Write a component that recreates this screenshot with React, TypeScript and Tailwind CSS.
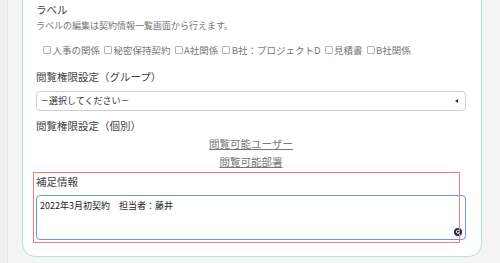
import React from "react";

const labels = ["人事の関係", "秘密保持契約", "A社関係", "B社：プロジェクトD", "見積書", "B社関係"];

export default function App() {
  return (
    <div
      className="w-[500px] h-[263px] overflow-hidden flex bg-[#f4f4f4]"
      style={{ fontFamily: '"Noto Sans CJK JP", "Noto Sans", sans-serif' }}
    >
      <div className="w-[8px] h-full bg-[#efefef] border-r border-[#e4e4e4]" />
      <div className="w-[14px] h-full" />
      <div className="w-[460px] h-[257px] bg-white border-x-[1.5px] border-b-[1.5px] border-[#b9dfdf] rounded-b-[14px] relative pl-[13px] pr-[12px]">
        <div className="pt-[2px] text-[10.5px] leading-[16px] text-[#444]">ラベル</div>
        <div className="mt-[1px] text-[9px] leading-[14px] text-[#777]">ラベルの編集は契約情報一覧画面から行えます。</div>
        <div className="mt-[10px] flex items-center gap-[4px] pl-[7px] text-[9.5px] leading-[14px] text-[#777]">
          {labels.map((l) => (
            <div key={l} className="flex items-center">
              <span className="w-[8px] h-[8px] border border-[#b5b5b5] rounded-[1px] mr-[1.5px] bg-white" />
              <span>{l}</span>
            </div>
          ))}
        </div>
        <div className="mt-[12px] text-[10.5px] leading-[16px] text-[#444]">閲覧権限設定（グループ）</div>
        <div className="mt-[6px] h-[20px] border border-[#d0d0d0] rounded-[4px] flex items-center justify-between pl-[3px] pr-[7px] w-[430px]">
          <span className="text-[9px] text-[#333]">－選択してください－</span>
          <span className="w-0 h-0 border-y-[2px] border-y-transparent border-r-[3px] border-r-[#333]" />
        </div>
        <div className="mt-[7px] text-[10.5px] leading-[16px] text-[#444]">閲覧権限設定（個別）</div>
        <div className="mt-[3px] flex flex-col items-center w-[430px] text-[10.5px] leading-[14px] text-[#777]">
          <span className="underline">閲覧可能ユーザー</span>
          <span className="underline mt-[4px]">閲覧可能部署</span>
        </div>
        <div className="mt-[5px] text-[10.5px] leading-[16px] text-[#444]">補足情報</div>
        <div className="mt-[5px] w-[430px] h-[45px] border-[1.5px] border-[#6a98dc] rounded-[4px] px-[3px] pt-[3px] relative">
          <div className="text-[9px] leading-[14px] text-[#222]">2022年3月初契約　担当者：藤井</div>
          <div className="absolute right-[2px] bottom-[2px] w-[11px] h-[11px] rounded-full bg-white flex items-center justify-center shadow-[0_0_1px_rgba(0,0,0,0.3)]">
            <svg width="8" height="8" viewBox="0 0 8 8">
              <circle cx="4" cy="4" r="4" fill="#15304f" />
              <path d="M5.2 2.8A1.6 1.6 0 1 0 5.4 4.6H4" stroke="#fff" strokeWidth="0.9" fill="none" />
            </svg>
          </div>
        </div>
        <div className="absolute left-[10px] top-[172px] w-[427px] h-[71px] border-[1.5px] border-[#f47c74] pointer-events-none" />
      </div>
    </div>
  );
}
